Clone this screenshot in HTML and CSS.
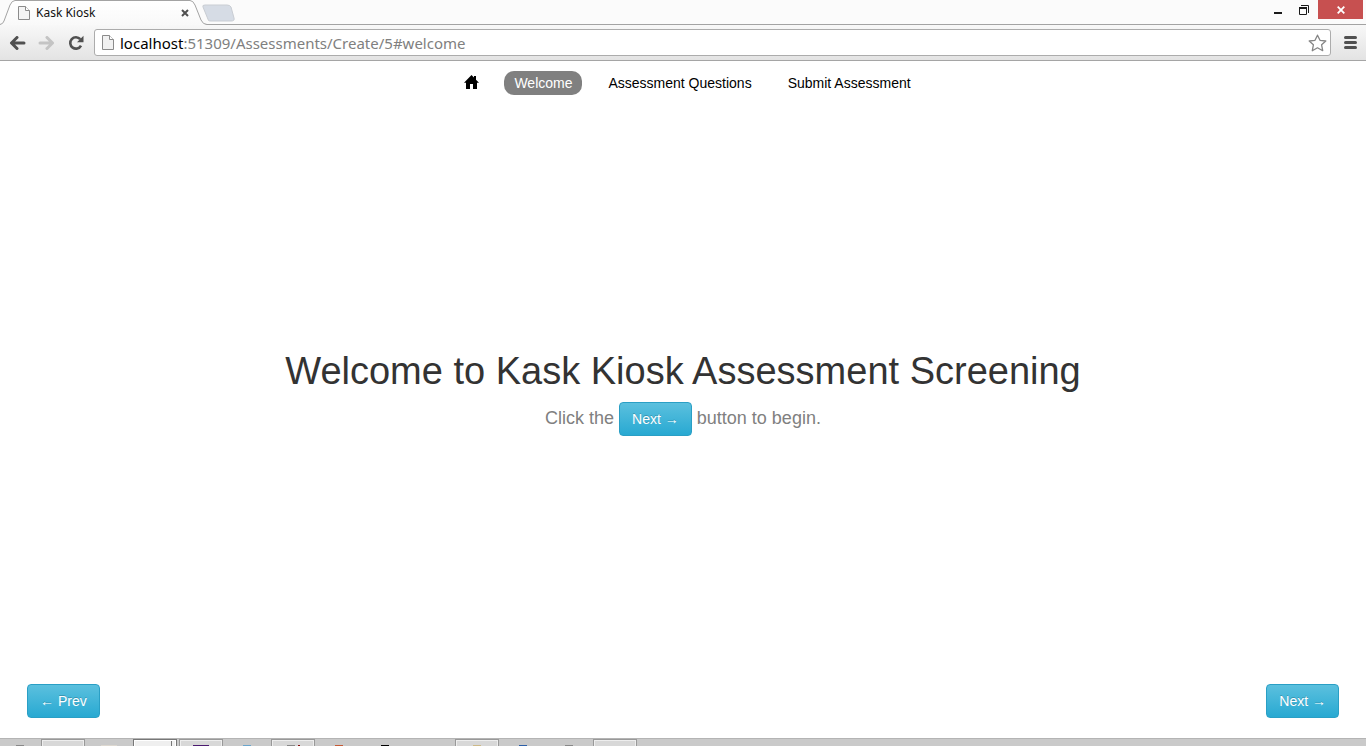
FILE: index.html
```html
<!DOCTYPE html>
<html lang="en">
<head>
<meta charset="utf-8">
<title>Kask Kiosk</title>
<link rel="stylesheet" href="styles.css">
</head>
<body>
<div class="window">
  <header class="chrome">
    <div class="tabstrip">
      <div class="tab">
        <svg class="tab-shape" width="236" height="25" viewBox="0 0 236 25" aria-hidden="true">
          <defs><linearGradient id="tabfill" x1="0" y1="0" x2="0" y2="1"><stop offset="0" stop-color="#fff"/><stop offset="1" stop-color="#f9f9f9"/></linearGradient></defs>
          <path d="M208.500 20.500 L203 7 Q202 5 205 5 H227 Q230 5 231 7 L234 18 Q235 21 231 21 H211 Q209 21 208.500 20.500Z" fill="#d6dce5" stroke="#c9cdd3"/>
          <path d="M0 24.500 Q3 24 4 21 L10 5 Q12 .5 15 .5 H190 Q193 .5 195 5 L201 20 Q203 24.500 207 24.500 V25 H0Z" fill="url(#tabfill)"/>
          <path d="M0 24.500 Q3 24 4 21 L10 5 Q12 .5 15 .5 H190 Q193 .5 195 5 L201 20 Q203 24.500 207 24.500 H236" fill="none" stroke="#a3a3a3"/>
        </svg>
        <div class="tab-content">
          <svg width="12" height="14" viewBox="0 0 12 14" aria-hidden="true"><path d="M.5 .5H7.500L11.500 4.500V13.500H.5Z" fill="#f4f4f4" stroke="#8b8b8b"/><path d="M7.500 .5V4.500H11.500" fill="#fff" stroke="#8b8b8b"/></svg>
          <span class="tab-title">Kask Kiosk</span>
          <button class="bare tab-close" aria-label="Close tab"><svg width="8" height="8" viewBox="0 0 8 8"><path d="M1 1L7 7M7 1L1 7" stroke="#505050" stroke-width="2"/></svg></button>
        </div>
      </div>
      <div class="window-controls">
        <button class="bare control" aria-label="Minimize"><svg width="8" height="12" viewBox="0 0 8 12"><path d="M0 9H8" stroke="#1a1a1a" stroke-width="2"/></svg></button>
        <button class="bare control" aria-label="Restore"><svg width="10" height="10" viewBox="0 0 10 10"><path d="M2 .5H9.500V8" fill="none" stroke="#1a1a1a"/><path d="M.5 2.500H7.500V9.500H.5Z" fill="none" stroke="#1a1a1a"/><path d="M0 3H8" stroke="#1a1a1a" stroke-width="2"/></svg></button>
        <button class="bare control-close" aria-label="Close"><svg width="8" height="8" viewBox="0 0 8 8"><path d="M.7 .7L7.300 7.300M7.300 .7L.7 7.300" stroke="#fff" stroke-width="1.800"/></svg></button>
      </div>
    </div>
    <div class="toolbar">
      <button class="bare tool" aria-label="Back"><svg width="17" height="14" viewBox="0 0 17 14"><path d="M8 1.500L2.500 7L8 12.500M3 7H15" fill="none" stroke="#505050" stroke-width="3" stroke-linejoin="round" stroke-linecap="round"/></svg></button>
      <button class="bare tool" aria-label="Forward"><svg width="17" height="14" viewBox="0 0 17 14"><path d="M9 1.500L14.500 7L9 12.500M14 7H2" fill="none" stroke="#c4c4c4" stroke-width="3" stroke-linejoin="round" stroke-linecap="round"/></svg></button>
      <button class="bare tool" aria-label="Reload"><svg width="16" height="16" viewBox="0 0 16 16"><path d="M12.300 4.200A5.700 5.700 0 1 0 13 10.600" fill="none" stroke="#505050" stroke-width="2.600"/><path d="M15.500 .8V7.300H9Z" fill="#505050"/></svg></button>
      <div class="omnibox">
        <svg width="12" height="15" viewBox="0 0 12 15" aria-hidden="true"><path d="M.5 .5H7.500L11.500 4.500V14.500H.5Z" fill="#f1f1f1" stroke="#8b8b8b"/><path d="M7.500 .5V4.500H11.500" fill="#fff" stroke="#8b8b8b"/></svg>
        <span class="url"><span class="host">localhost</span>:51309/Assessments/Create/5#welcome</span>
        <button class="bare star" aria-label="Bookmark this page"><svg width="19" height="18" viewBox="0 0 19 18"><path d="M9.500 1.200L12 6.300L17.800 7L13.600 10.800L14.700 16.700L9.500 13.800L4.300 16.700L5.400 10.800L1.200 7L7 6.300Z" fill="#fff" stroke="#858585" stroke-width="1.300" stroke-linejoin="round"/></svg></button>
      </div>
      <button class="bare menu" aria-label="Menu"><svg width="13" height="13" viewBox="0 0 13 13"><path d="M1.500 1.500H11.500M1.500 6.500H11.500M1.500 11.500H11.500" stroke="#505050" stroke-width="3" stroke-linecap="round"/></svg></button>
    </div>
  </header>

  <main class="page">
    <nav class="nav">
      <a class="nav-link nav-home" href="#home" aria-label="Home"><svg width="15" height="14" viewBox="0 0 15 14"><path d="M7.500 0L10 2.600V1H12V4.700L15 7.800H13V14H9V9H6V14H2V7.800H0Z" fill="#000"/></svg></a>
      <a class="nav-link active" href="#welcome">Welcome</a>
      <a class="nav-link" href="#questions">Assessment Questions</a>
      <a class="nav-link" href="#submit">Submit Assessment</a>
    </nav>
    <section class="welcome">
      <h1 class="title">Welcome to Kask Kiosk Assessment Screening</h1>
      <p class="lead">Click the <button class="btn">Next →</button> button to begin.</p>
    </section>
    <div class="pager">
      <button class="btn">← Prev</button>
      <button class="btn">Next →</button>
    </div>
  </main>

  <footer class="taskbar">
    <div class="slot first"><i class="chip gray"></i></div>
    <div class="slot open"></div>
    <div class="slot"><i class="chip wide pale"></i></div>
    <div class="slot open current"></div>
    <div class="slot open"><i class="chip wide purple"></i></div>
    <div class="slot"><i class="chip sky"></i></div>
    <div class="slot open"><i class="chip gray"></i><i class="chip thin red"></i></div>
    <div class="slot"><i class="chip orange"></i></div>
    <div class="slot"><i class="chip black"></i></div>
    <div class="slot"></div>
    <div class="slot open"><i class="chip tan"></i></div>
    <div class="slot"><i class="chip blue"></i></div>
    <div class="slot"><i class="chip gray"></i></div>
    <div class="slot open"></div>
  </footer>
</div>
</body>
</html>
```

FILE: styles.css
```css
* { box-sizing: border-box; }

body {
  margin: 0;
  font-family: "Liberation Sans", Arial, sans-serif;
  font-size: 14px;
  line-height: 20px;
  color: #333;
  background: #fff;
}

svg { display: block; flex: none; }

.bare {
  display: flex;
  align-items: center;
  justify-content: center;
  padding: 0;
  border: 0;
  background: none;
}

.window {
  display: flex;
  flex-direction: column;
  min-height: 100vh;
}

/* Browser frame */
.chrome { border-bottom: 1px solid #a5a5a5; }

.tabstrip {
  display: flex;
  justify-content: space-between;
  height: 25px;
  background: linear-gradient(#a3a3a3, #a3a3a3) bottom / 100% 1px no-repeat #fbfbfb;
}

.tab { position: relative; width: 236px; }

.tab-shape { position: absolute; inset: 0; }

.tab-content {
  position: relative;
  display: flex;
  align-items: center;
  width: 189px;
  height: 25px;
  padding-left: 18px;
  gap: 6px;
}

.tab-title {
  flex: 1;
  font: 12px/16px "Noto Sans", sans-serif;
  color: #111;
}

.window-controls { display: flex; padding-right: 3px; }

.control { width: 26px; height: 19px; }

.control-close {
  width: 45px;
  height: 19px;
  margin-left: 1px;
  background: #c75050;
}

.toolbar {
  display: flex;
  align-items: center;
  height: 35px;
  padding: 0 9px;
  background: linear-gradient(#f8f8f8, #e3e3e3);
}

.tool { width: 17px; margin-right: 12px; }

.tool + .tool + .tool { margin-right: 10px; }

.omnibox {
  display: flex;
  flex: 1;
  align-items: center;
  gap: 6px;
  height: 27px;
  padding: 0 3px 0 7px;
  border: 1px solid #acacac;
  border-radius: 3px;
  background: #fff;
}

.url {
  flex: 1;
  font: 15px/20px "Noto Sans", sans-serif;
  color: #808080;
}

.host { color: #000; }

.menu { margin-left: 13px; }

/* Page */
.page {
  display: flex;
  flex: 1;
  flex-direction: column;
}

.nav {
  display: flex;
  justify-content: center;
  gap: 16px;
  padding: 10px 0 10px 9px;
}

.nav-link {
  padding: 2px 10px;
  border-radius: 10px;
  color: #000;
  text-decoration: none;
}

.nav-home { padding: 4px 9px 4px 10px; }

.active { background: #808080; color: #fff; }

.welcome {
  display: flex;
  flex: 1;
  flex-direction: column;
  justify-content: center;
  gap: 10px;
  padding-bottom: 2px;
  text-align: center;
}

.title {
  margin: 0;
  font-size: 38px;
  font-weight: 400;
  line-height: 40px;
}

.lead {
  margin: 0;
  font-size: 18px;
  line-height: 34px;
  color: #808080;
}

.btn {
  height: 34px;
  padding: 0 12px;
  border: 1px solid #2a9fc5;
  border-radius: 4px;
  background: linear-gradient(#5bc0de, #28a9d2);
  color: #fff;
  font: 14px/20px "Liberation Sans", Arial, sans-serif;
  text-shadow: 0 -1px 0 rgba(0, 0, 0, 0.2);
  vertical-align: middle;
}

.pager {
  display: flex;
  justify-content: space-between;
  padding: 0 27px 20px;
}

/* System taskbar */
.taskbar {
  display: flex;
  height: 8px;
  overflow: hidden;
  border-top: 1px solid #b4b4b4;
  background: #cacaca;
}

.slot {
  display: flex;
  flex: none;
  align-items: flex-end;
  justify-content: center;
  gap: 3px;
  width: 44px;
  margin-right: 2px;
}

.first { width: 39px; }

.open {
  border: solid #999;
  border-width: 1px 1px 0;
  background: #d8d8d8;
  box-shadow: inset 1px 1px #eee, inset -1px 0 #eee;
}

.current {
  border-color: #777;
  background: linear-gradient(#777, #777) 37px 0 / 1px 100% no-repeat #efefef;
  box-shadow: inset 1px 1px #fff, inset -1px 0 #fff;
}

.chip { width: 8px; height: 1px; }
.wide { width: 16px; }
.thin { width: 2px; }
.gray { background: #888; }
.pale { background: #ddd8d0; }
.purple { background: #4b1a70; }
.sky { background: #6aa5cc; }
.red { background: #8b1010; }
.orange { background: #c65a35; }
.black { background: #000; }
.tan { background: #cdb988; }
.blue { background: #2c5fa8; }
```
